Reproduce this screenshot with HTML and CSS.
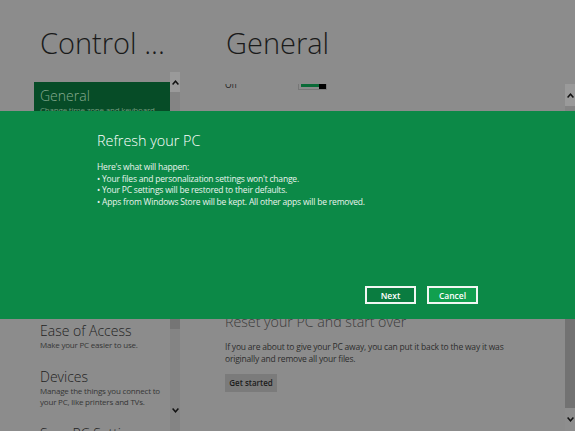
FILE: index.html
```html
<!DOCTYPE html>
<html>
<head>
<meta charset="utf-8">
<link rel="stylesheet" href="styles.css">
</head>
<body>
<div class="screen">
  <aside class="nav">
    <h1 class="title">Control ...</h1>
    <div class="nav-body">
      <ul class="nav-list">
        <li class="item selected">
          <div class="item-title">General</div>
          <div class="item-desc">Change time zone and keyboard<br>settings.</div>
        </li>
        <li class="item">
          <div class="item-title">Privacy</div>
          <div class="item-desc">Control how apps use your<br>personal info.</div>
        </li>
        <li class="item">
          <div class="item-title">Search</div>
          <div class="item-desc">Choose what you search and<br>how results appear.</div>
        </li>
        <li class="item">
          <div class="item-title">Share</div>
          <div class="item-desc">Pick the apps you share with<br>most often.</div>
        </li>
        <li class="item">
          <div class="item-title">Ease of Access</div>
          <div class="item-desc">Make your PC easier to use.</div>
        </li>
        <li class="item">
          <div class="item-title">Devices</div>
          <div class="item-desc">Manage the things you connect to<br>your PC, like printers and TVs.</div>
        </li>
        <li class="item">
          <div class="item-title">Sync PC Settings</div>
          <div class="item-desc">Sync your settings across PCs.</div>
        </li>
      </ul>
      <div class="scrollbar left">
        <div class="sb-btn sb-up"><svg width="7" height="5" viewBox="0 0 7 5"><path d="M0.6 4.4 L3.5 1.2 L6.4 4.4" fill="none" stroke="#111" stroke-width="1.5"/></svg></div>
        <div class="sb-track">
          <div class="sb-thumb"></div>
        </div>
        <div class="sb-btn sb-down"><svg width="7" height="5" viewBox="0 0 7 5"><path d="M0.6 0.6 L3.5 3.8 L6.4 0.6" fill="none" stroke="#111" stroke-width="1.5"/></svg></div>
        <div class="sb-tail"></div>
      </div>
    </div>
  </aside>

  <main class="content">
    <h1 class="title">General</h1>
    <div class="content-body">
      <div class="settings">
        <div class="toggle-row">
          <span class="toggle-label">Off</span>
          <span class="toggle"><span class="toggle-fill"></span><span class="toggle-knob"></span></span>
        </div>
        <div class="covered"></div>
        <section class="reset">
          <h2 class="section-title">Reset your PC and start over</h2>
          <p class="section-text">If you are about to give your PC away, you can put it back to the way it was<br>originally and remove all your files.</p>
          <button class="plain-btn">Get started</button>
        </section>
      </div>
      <div class="scrollbar right">
        <div class="sb-btn sb-up"><svg width="7" height="5" viewBox="0 0 7 5"><path d="M0.6 4.4 L3.5 1.2 L6.4 4.4" fill="none" stroke="#111" stroke-width="1.5"/></svg></div>
        <div class="sb-track">
          <div class="sb-thumb"></div>
        </div>
        <div class="sb-btn sb-down"><svg width="7" height="5" viewBox="0 0 7 5"><path d="M0.6 0.6 L3.5 3.8 L6.4 0.6" fill="none" stroke="#111" stroke-width="1.5"/></svg></div>
      </div>
    </div>
  </main>

  <div class="dialog">
    <div class="dialog-inner">
      <h2 class="dialog-title">Refresh your PC</h2>
      <div class="dialog-text">
        <p>Here's what will happen:</p>
        <p>• Your files and personalization settings won't change.</p>
        <p>• Your PC settings will be restored to their defaults.</p>
        <p>• Apps from Windows Store will be kept. All other apps will be removed.</p>
      </div>
      <div class="dialog-actions">
        <button class="dlg-btn primary">Next</button>
        <button class="dlg-btn secondary">Cancel</button>
      </div>
    </div>
  </div>
</div>
</body>
</html>
```

FILE: styles.css
```css
html, body {
  margin: 0;
  padding: 0;
}

.screen {
  width: 575px;
  height: 431px;
  background: #8c8c8c;
  position: relative;
  overflow: hidden;
  display: flex;
  font-family: "Open Sans", "Noto Sans", "Liberation Sans", sans-serif;
  color: #1c1c1c;
}

.title {
  margin: 0;
  font-size: 29px;
  line-height: 40px;
  font-weight: 300;
  white-space: nowrap;
  color: #1a1a1a;
  padding-top: 23px;
}

/* left navigation */
.nav {
  width: 146px;
  padding-left: 34px;
  display: flex;
  flex-direction: column;
  flex: none;
}

.nav .title {
  padding-left: 6px;
}

.nav-body {
  display: flex;
  margin-top: 9px;
  flex: 1;
  min-height: 0;
}

.nav-list {
  width: 136px;
  list-style: none;
  margin: 0;
  padding: 10px 0 0;
  overflow: hidden;
}

.item {
  padding: 6px 6px 13px;
  white-space: nowrap;
}

.item.selected {
  background: #064c27;
  padding-bottom: 20px;
}

.item-title {
  font-size: 14px;
  line-height: 16px;
  font-weight: 300;
  color: #1e1e1e;
}

.item-desc {
  font-size: 8px;
  line-height: 11px;
  letter-spacing: -0.2px;
  color: #363636;
}

.item.selected .item-title {
  color: #86ab91;
}

.item.selected .item-desc {
  color: #6f9a7c;
}

/* scrollbars */
.scrollbar {
  width: 10px;
  display: flex;
  flex-direction: column;
  flex: none;
  background: #848484;
}

.sb-btn {
  height: 20px;
  display: flex;
  align-items: center;
  justify-content: center;
  flex: none;
}

.sb-up {
  background: #9a9a9a;
}

.sb-track {
  flex: 1;
  display: flex;
  flex-direction: column;
}

.sb-thumb {
  background: #757575;
}

.left .sb-thumb {
  margin-top: 200px;
  height: 37px;
}

.left .sb-down {
  background: #848484;
}

.left .sb-tail {
  height: 11px;
}

.right {
  margin-top: 12px;
}

.right .sb-up {
  height: 22px;
}

.right .sb-track {
  background: #848484;
}

.right .sb-thumb {
  margin-top: 190px;
  height: 112px;
  background: #727272;
}

.right .sb-down {
  height: 23px;
  background: #8e8e8e;
}

/* right content */
.content {
  flex: 1;
  display: flex;
  flex-direction: column;
  min-width: 0;
}

.content .title {
  padding-left: 46px;
}

.content-body {
  display: flex;
  flex: 1;
  min-height: 0;
  margin-top: 9px;
}

.settings {
  flex: 1;
  padding-left: 45px;
  margin-top: 12px;
  overflow: hidden;
}

.toggle-row {
  display: flex;
  align-items: flex-end;
  margin-top: -5px;
  height: 12px;
}

.toggle-label {
  width: 73px;
  font-size: 8.5px;
  line-height: 12px;
  color: #222;
}

.toggle {
  width: 29px;
  height: 11px;
  box-sizing: border-box;
  border: 1px solid #777;
  display: flex;
  margin-bottom: 1px;
}

.toggle-fill {
  flex: 1;
  margin: 2px 0 2px 2px;
  background: #0a6a37;
}

.toggle-knob {
  width: 7px;
  background: #000;
}

.covered {
  height: 221px;
}

.section-title {
  margin: 0;
  font-size: 14.2px;
  line-height: 20px;
  font-weight: 300;
  color: #3a3a3a;
  white-space: nowrap;
}

.section-text {
  margin: 9px 0 5px;
  font-size: 8.5px;
  line-height: 11.5px;
  letter-spacing: -0.2px;
  color: #2c2c2c;
  white-space: nowrap;
}

.plain-btn {
  font-family: inherit;
  width: 52px;
  height: 18px;
  padding: 0;
  border: none;
  background: #7b7b7b;
  color: #1c1c1c;
  font-size: 8px;
  font-weight: 600;
  white-space: nowrap;
}

/* dialog overlay */
.dialog {
  position: absolute;
  left: 0;
  top: 111px;
  width: 575px;
  height: 208px;
  background: #0c8947;
}

.dialog-inner {
  height: 100%;
  box-sizing: border-box;
  padding: 18px 97px 15px;
  display: flex;
  flex-direction: column;
}

.dialog-title {
  margin: 0;
  font-size: 14.4px;
  line-height: 24px;
  font-weight: 300;
  color: #ffffff;
}

.dialog-text {
  margin-top: 8px;
  color: #eaf4ee;
  font-size: 8.5px;
  line-height: 11.7px;
  letter-spacing: -0.2px;
}

.dialog-text p {
  margin: 0;
  white-space: nowrap;
}

.dialog-actions {
  margin-top: auto;
  display: flex;
  justify-content: flex-end;
  gap: 11px;
}

.dlg-btn {
  font-family: inherit;
  width: 51px;
  height: 18px;
  padding: 0;
  box-sizing: border-box;
  border: 2px solid #f2f7f3;
  color: #ffffff;
  font-size: 8.5px;
  font-weight: 600;
}

.dlg-btn.primary {
  background: #0a7c40;
}

.dlg-btn.secondary {
  background: #11a04f;
}
```
